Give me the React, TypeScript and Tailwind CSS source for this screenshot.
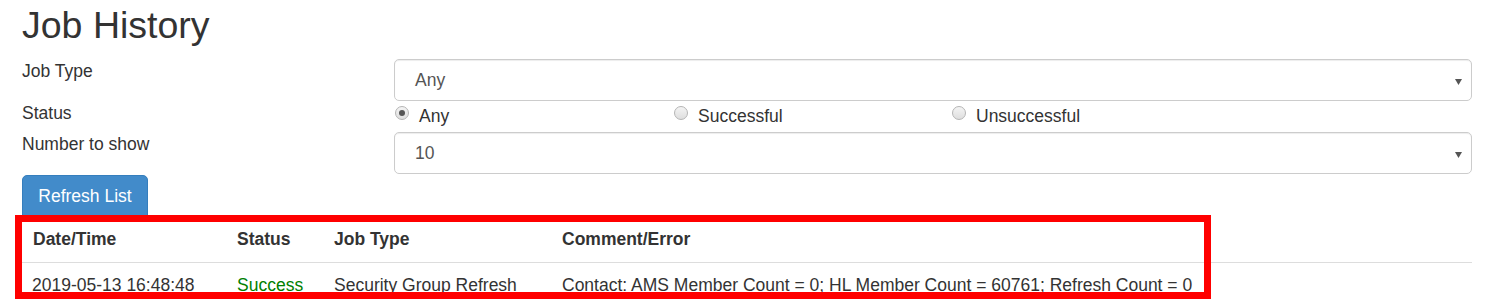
import React from "react";

function SelectBox({ value }: { value: string }) {
  return (
    <div className="relative flex h-[42px] w-full items-center rounded-[5px] border border-[#cccccc] bg-white pl-[20px] shadow-[inset_0_1px_1px_rgba(0,0,0,0.075)]">
      <span className="leading-[24px] text-[#555555]">{value}</span>
      <svg
        className="absolute right-[9px] top-[19px]"
        width="7"
        height="6"
        viewBox="0 0 7 6"
      >
        <polygon points="0,0 7,0 3.5,6" fill="#555555" />
      </svg>
    </div>
  );
}

function Radio({ label, checked }: { label: string; checked?: boolean }) {
  return (
    <div className="flex items-start">
      <div className="mt-[5px] flex h-[14px] w-[14px] items-center justify-center rounded-full border border-[#b5b5b5] bg-gradient-to-b from-[#f4f4f4] to-[#dedede]">
        {checked ? <div className="h-[6px] w-[6px] rounded-full bg-[#555555]" /> : null}
      </div>
      <span className="ml-[10px] pt-[3px] leading-[24px]">{label}</span>
    </div>
  );
}

export default function App() {
  return (
    <div
      className="relative h-[307px] w-[1491px] overflow-hidden bg-white text-[17.5px] text-[#333333]"
      style={{ fontFamily: '"Liberation Sans", Arial, sans-serif' }}
    >
      <div className="pl-[22px] pr-[19px]">
        <h2 className="mt-[5px] text-[37.5px] font-normal leading-[41px]">Job History</h2>

        <div className="mt-[13px] flex h-[42px]">
          <div className="w-[372px] leading-[24px]">Job Type</div>
          <div className="flex-1">
            <SelectBox value="Any" />
          </div>
        </div>

        <div className="flex h-[31px]">
          <div className="w-[372px] leading-[24px]">Status</div>
          <div className="flex flex-1">
            <div className="w-[280px] pl-[1px]">
              <Radio label="Any" checked />
            </div>
            <div className="w-[278px]">
              <Radio label="Successful" />
            </div>
            <div className="flex-1">
              <Radio label="Unsuccessful" />
            </div>
          </div>
        </div>

        <div className="flex h-[42px]">
          <div className="w-[372px] leading-[24px]">Number to show</div>
          <div className="flex-1">
            <SelectBox value="10" />
          </div>
        </div>

        <div className="mt-[1px] flex">
          <button className="flex h-[41px] w-[126px] items-center justify-center rounded-t-[5px] border border-[#357ebd] bg-[#428bca] text-white leading-[24px]">
            Refresh List
          </button>
        </div>

        <div className="w-full">
          <div className="flex h-[47px] border-b border-[#dddddd] pt-[11px] font-bold leading-[24px]">
            <div className="w-[204px] pl-[11px]">Date/Time</div>
            <div className="w-[97px] pl-[11px]">Status</div>
            <div className="w-[228px] pl-[11px]">Job Type</div>
            <div className="flex-1 pl-[11px]">Comment/Error</div>
          </div>
          <div className="flex pt-[10px] leading-[24px]">
            <div className="w-[204px] pl-[10px]">2019-05-13 16:48:48</div>
            <div className="w-[97px] pl-[11px] text-[#008000]">Success</div>
            <div className="w-[228px] pl-[11px]">Security Group Refresh</div>
            <div className="flex-1 pl-[11px]">
              Contact: AMS Member Count = 0; HL Member Count = 60761; Refresh Count = 0
            </div>
          </div>
        </div>
      </div>

      <div className="absolute left-[15px] top-[215px] h-[84px] w-[1196px] border-[7px] border-[#ff0000]" />
    </div>
  );
}
